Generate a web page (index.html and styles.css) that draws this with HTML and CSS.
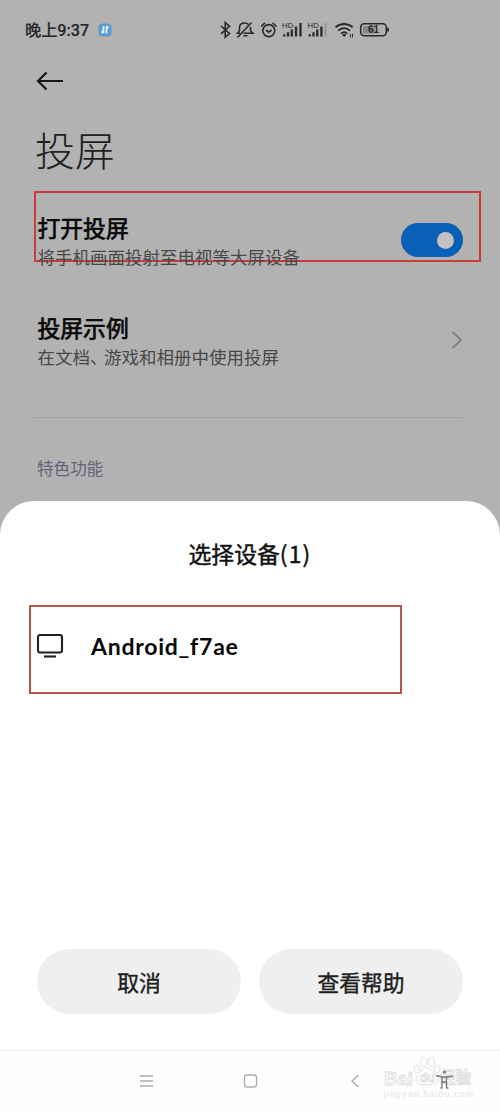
FILE: index.html
```html
<!DOCTYPE html>
<html lang="zh-CN">
<head>
<meta charset="utf-8">
<title>投屏</title>
<link rel="stylesheet" href="styles.css">
</head>
<body>
<div class="screen">
  <header class="status">
    <span class="clock">晚上9:37</span>
    <svg class="app-badge" width="14" height="14" viewBox="0 0 14 14"><rect x=".5" y=".5" width="13" height="13" rx="4" fill="#599bd1"/><path d="M5.500 3v7M5.500 10L3.500 8.500M8.500 10.500V3.500M8.500 3.500l2 1.500" fill="none" stroke="#e3f3ff" stroke-width="1.700"/></svg>
    <svg class="status-icons" width="172" height="24" viewBox="218 18 172 24" fill="none" stroke="#292929" stroke-width="1.600">
      <path d="M221 26l8.500 7.500-4.300 3.700V22.500l4.300 3.800-8.500 7.500"/>
      <path d="M237.500 37.500l14-15M240 33.200h-2.500l2-2.500v-3c0-3 2-4.700 5-4.700 1.500 0 3 .5 3.800 1.400M250.500 27v3.700l2.400 2.500h-9.400M243.500 35.700h4" />
      <circle cx="268.800" cy="30.600" r="6"/><path d="M266 30l2.800 2.200 2.800-2.200M261 26.500l4-3.700M276.500 26.500l-4-3.700"/>
      <path d="M284.300 36.500v-2.200M288 36.500v-4.200M291.800 36.500v-7M296 36.500v-10M300.500 36.500V23" stroke-width="2.300"/>
      <path d="M309.700 36.500v-2.200M313.500 36.500v-4.200M317.300 36.500v-7M321.400 36.500v-10" stroke-width="2.300"/><path d="M325.500 36.500V23" stroke="#929292" stroke-width="1.800"/>
      <path d="M335.500 27.300c5-4.400 12.200-4.400 17.200 0M338.200 30.600c3.500-3.100 8.300-3.100 11.800 0M341 33.600c2-1.700 4.300-1.700 6.300 0" stroke-width="1.900"/><path d="M342 34.700l2.200 2.300 2.200-2.300c-1.400-1-3-1-4.400 0z" fill="#292929" stroke="none"/><path d="M350.300 34v3.500M352.500 34v3.500" stroke-width="1"/>
      <rect x="360.700" y="23.700" width="25.600" height="12" rx="3.500"/><path d="M388 28v3.500" stroke-width="1.800"/><rect x="363" y="26" width="12" height="7.500" rx="1" fill="#888" stroke="none"/>
      <g fill="#292929" stroke="none" font-family="Liberation Sans, sans-serif"><text x="282" y="27.500" font-size="7.800">HD</text><text x="307.500" y="27.500" font-size="7.800">HD</text><text x="368" y="33.300" font-size="10" font-weight="700">61</text></g>
    </svg>
  </header>
  <main class="settings">
    <svg class="back" width="28" height="20" viewBox="0 0 28 20"><path d="M10.500 1.500L2 10l8.500 8.500M2 10h25" fill="none" stroke="#171717" stroke-width="2.200"/></svg>
    <h1 class="page-title">投屏</h1>
    <section class="row highlighted">
      <div class="copy"><h2>打开投屏</h2><p>将手机画面投射至电视等大屏设备</p></div>
      <span class="toggle"><i></i></span>
    </section>
    <section class="row example">
      <div class="copy"><h2>投屏示例</h2><p>在文档<span class="comma">、</span>游戏和相册中使用投屏</p></div>
      <svg width="12" height="20" viewBox="0 0 12 20"><path d="M1.500 1.800L10 10l-8.500 8.200" fill="none" stroke="#797979" stroke-width="1.600"/></svg>
    </section>
    <h3 class="group">特色功能</h3>
  </main>
  <section class="sheet">
    <h2 class="sheet-title">选择设备<span>(1)</span></h2>
    <div class="device">
      <svg width="28" height="26" viewBox="0 0 28 26"><rect x="2" y="2" width="24" height="17.500" rx="2" fill="none" stroke="#202124" stroke-width="2.100"/><path d="M8 23.500h12" stroke="#202124" stroke-width="2.100"/></svg>
      <span>Android_f7ae</span>
    </div>
    <div class="actions"><button>取消</button><button>查看帮助</button></div>
  </section>
  <nav class="nav">
    <svg width="500" height="60" viewBox="0 1051 500 60" fill="none" stroke="#aaa" stroke-width="1.300">
      <path d="M140 1076h13M140 1081h13M140 1086h13"/><rect x="244.500" y="1075" width="12" height="12" rx="2.500"/><path d="M358.500 1075l-6.500 6 6.500 6"/>
      <g stroke="#dadada" stroke-width=".8" fill="#fdfdfd">
        <text x="384" y="1085" font-family="Liberation Sans, sans-serif" font-weight="700" font-size="18" textLength="29" lengthAdjust="spacingAndGlyphs">Bai</text>
        <ellipse cx="417" cy="1069" rx="3" ry="4"/><ellipse cx="423.500" cy="1062" rx="3.200" ry="4.500"/><ellipse cx="431.500" cy="1062" rx="3.200" ry="4.500"/><ellipse cx="437" cy="1069" rx="3" ry="4"/>
        <path d="M427 1068c-4 0-5 4-8.500 6.500-4 3-3 9 2 10h13c6-1 6-7 2-10-3.500-2.500-4.500-6.500-8.500-6.500z"/>
        <text x="420" y="1082" font-family="Liberation Sans, sans-serif" font-weight="700" font-size="12">du</text>
        <text x="440" y="1083" font-family="Noto Sans CJK SC, sans-serif" font-weight="700" font-size="15.500">经验</text>
      </g>
      <text x="384" y="1096.500" fill="#e2e2e2" stroke="none" font-family="Liberation Sans, sans-serif" font-size="9" textLength="89">jingyan.baidu.com</text>
      <circle cx="444.500" cy="1072" r="1.500" fill="#777" stroke="none"/><path d="M436 1075.500l6 1.500h5l6-1M442 1077v11.500M446.500 1077v11.500M442 1082h4.500M440.500 1088h2M446.500 1088h2" stroke="#777" stroke-width="1.300"/>
    </svg>
  </nav>
</div>
</body>
</html>
```
FILE: styles.css
```css
* { box-sizing: border-box; }
body { margin: 0; font-family: "Noto Sans CJK SC", sans-serif; }
h1, h2, h3, p { margin: 0; font-weight: 400; }
svg { display: block; flex: none; }
.screen { width: 500px; height: 1111px; display: flex; flex-direction: column; background: #b2b2b2; overflow: hidden; }
.status { height: 60px; padding: 0 0 0 25px; display: flex; align-items: center; flex: none; }
.clock { width: 73px; padding-top: 1px; font-size: 16.200px; line-height: 24px; color: #292929; white-space: nowrap; font-family: Roboto, "Noto Sans CJK SC", sans-serif; font-weight: 500; -webkit-text-stroke: .2px #292929; }
.status-icons { margin-left: 106px; }
.settings { height: 441px; flex: none; padding: 11px 19px 0 34px; }
.back { margin-left: 2px; }
.page-title { margin: 28px 0 0 1px; height: 60px; font-size: 40px; line-height: 60px; font-weight: 300; color: #202020; }
.row { display: flex; justify-content: space-between; }
.highlighted { margin-top: 12px; height: 71px; border: 2px solid #c93c3c; padding: 18px 16px 0 1.500px; }
.copy h2 { font-size: 22.800px; line-height: 34px; color: #080808; -webkit-text-stroke: .7px #080808; }
.copy p { font-size: 17.500px; line-height: 24px; color: #484848; white-space: nowrap; }
.toggle { width: 62px; height: 34px; border-radius: 17px; margin-top: 12px; background: #0960b9; padding: 9px 9px 0 0; display: flex; justify-content: flex-end; }
.toggle i { width: 17px; height: 17px; border-radius: 50%; background: #c4c2c0; }
.example { height: 156px; margin-right: 18px; padding: 49px 0 0 3.500px; border-bottom: 1px solid #a0a0a0; }
.example svg { margin-top: 19px; }
.comma { letter-spacing: -3.500px; }
.group { margin: 38px 0 0 3px; font-size: 16.600px; line-height: 25px; color: #646477; }
.sheet { height: 549px; flex: none; background: #fff; border-radius: 34px 34px 0 0; padding: 36px 37px 0 29px; }
.sheet-title { margin: 0 -8px 0 0; text-align: center; font-size: 22.800px; line-height: 34px; color: #111; -webkit-text-stroke: .45px #111; }
.sheet-title span { letter-spacing: 1.200px; }
.device { width: 373px; height: 89px; margin-top: 34px; border: 2px solid #b9544c; padding: 0 0 8px 5px; display: flex; align-items: center; gap: 27px; }
.device span { font-family: Lato, sans-serif; font-size: 23px; font-weight: 700; line-height: 32px; letter-spacing: .75px; color: #080808; }
.actions { display: flex; gap: 18px; margin: 255px 0 0 8px; }
.actions button { flex: 1; height: 65px; padding: 0; border: 0; border-radius: 33px; background: #efefef; font: 21.800px/32px "Noto Sans CJK SC", sans-serif; color: #202020; -webkit-text-stroke: .4px #202020; }
.nav { height: 61px; flex: none; background: #fefefe; border-top: 1px solid #eee; }
```
